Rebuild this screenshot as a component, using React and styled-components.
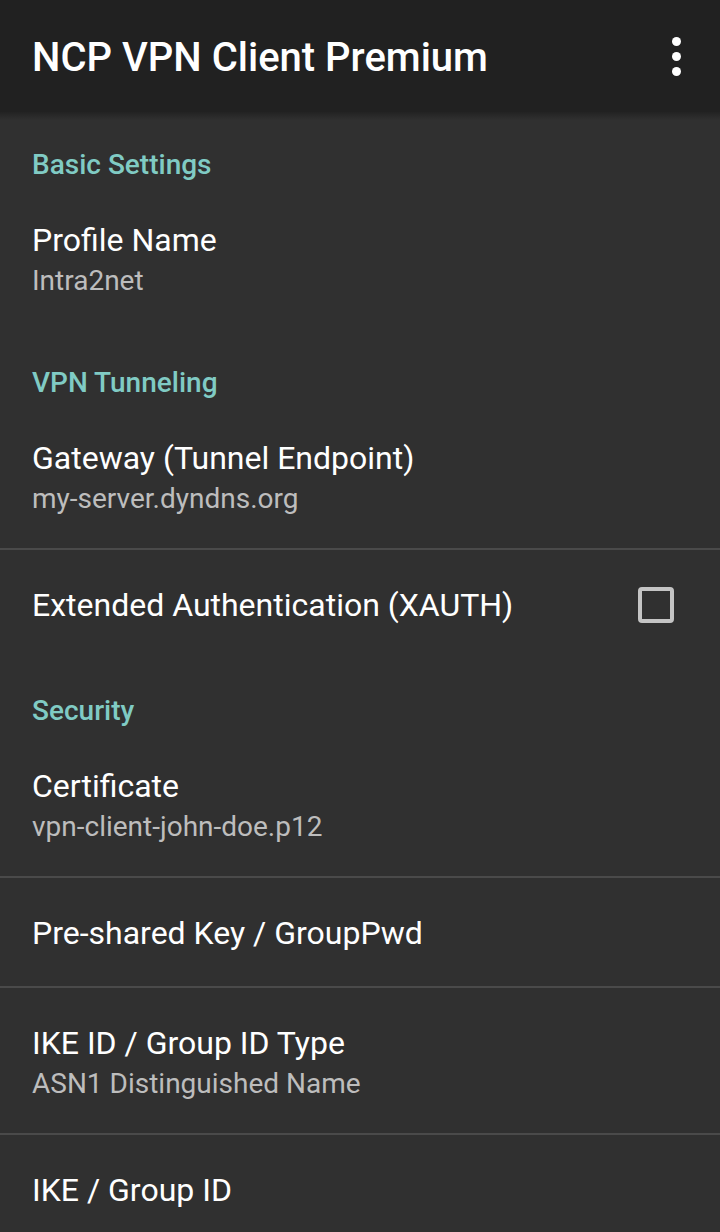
import React, { useState } from 'react';
import styled, { createGlobalStyle } from 'styled-components';

const GlobalStyle = createGlobalStyle`
    html, body {
        margin: 0;
        padding: 0;
        background: #303030;
    }
    body {
        font-family: Roboto, "Noto Sans", "Liberation Sans", sans-serif;
        -webkit-font-smoothing: antialiased;
    }
`;

const sections = [
    {
        title: 'Basic Settings',
        items: [{ title: 'Profile Name', summary: 'Intra2net' }],
    },
    {
        title: 'VPN Tunneling',
        items: [
            { title: 'Gateway (Tunnel Endpoint)', summary: 'my-server.dyndns.org' },
            { title: 'Extended Authentication (XAUTH)', checkbox: true },
        ],
    },
    {
        title: 'Security',
        items: [
            { title: 'Certificate', summary: 'vpn-client-john-doe.p12' },
            { title: 'Pre-shared Key / GroupPwd' },
            { title: 'IKE ID / Group ID Type', summary: 'ASN1 Distinguished Name' },
            { title: 'IKE / Group ID' },
        ],
    },
];

function App() {
    const [xauth, setXauth] = useState(false);

    return (
        <Screen>
            <GlobalStyle />
            <Toolbar>
                <Title>NCP VPN Client Premium</Title>
                <OverflowButton aria-label="More options">
                    <Dot />
                    <Dot />
                    <Dot />
                </OverflowButton>
            </Toolbar>

            <List>
                {sections.map((section) => (
                    <React.Fragment key={section.title}>
                        <Category>{section.title}</Category>
                        {section.items.map((item, i) => (
                            <Row
                                key={item.title}
                                $twoLine={!!item.summary}
                                $divider={i < section.items.length - 1}
                                onClick={item.checkbox ? () => setXauth(!xauth) : undefined}
                            >
                                <RowText>
                                    <RowTitle>{item.title}</RowTitle>
                                    {item.summary && <RowSummary>{item.summary}</RowSummary>}
                                </RowText>
                                {item.checkbox && <CheckBox $checked={xauth} />}
                            </Row>
                        ))}
                    </React.Fragment>
                ))}
            </List>
        </Screen>
    );
}

const Screen = styled.div`
    width: 720px;
    height: 1232px;
    overflow: hidden;
    background: #303030;
`;

const Toolbar = styled.header`
    position: relative;
    height: 112px;
    background: #212121;
    display: flex;
    align-items: center;
    justify-content: space-between;
    padding: 0 20px 0 32px;
    box-sizing: border-box;
    z-index: 1;

    &::after {
        content: '';
        position: absolute;
        left: 0;
        right: 0;
        top: 100%;
        height: 8px;
        background: linear-gradient(rgba(0, 0, 0, 0.28), rgba(0, 0, 0, 0));
    }
`;

const Title = styled.h1`
    margin: 4px 0 0;
    color: #ffffff;
    font-size: 40px;
    font-weight: 500;
    letter-spacing: 0;
    line-height: 1;
`;

const OverflowButton = styled.div`
    width: 48px;
    height: 48px;
    display: flex;
    flex-direction: column;
    align-items: center;
    justify-content: center;
    gap: 6px;
`;

const Dot = styled.span`
    width: 9px;
    height: 9px;
    border-radius: 50%;
    background: #ffffff;
`;

const List = styled.main`
    display: flex;
    flex-direction: column;
`;

const Category = styled.div`
    height: 73px;
    box-sizing: border-box;
    padding: 39px 32px 6px;
    color: #80cbc4;
    font-size: 28px;
    font-weight: 500;
    line-height: 28px;
`;

const Row = styled.div`
    box-sizing: border-box;
    padding: 0 46px 0 32px;
    display: flex;
    align-items: flex-start;
    justify-content: space-between;
    border-bottom: ${(p) => (p.$divider ? '2px solid #4a4a4a' : 'none')};
    height: ${(p) => (p.$twoLine ? 145 : 108) + (p.$divider ? 2 : 0)}px;
`;

const RowText = styled.div`
    display: flex;
    flex-direction: column;
    padding-top: 34px;
`;

const RowTitle = styled.div`
    color: #ffffff;
    font-size: 32px;
    line-height: 42px;
`;

const RowSummary = styled.div`
    color: #bdbdbd;
    font-size: 28px;
    line-height: 40px;
`;

const CheckBox = styled.span`
    margin-top: 37px;
    width: 36px;
    height: 36px;
    box-sizing: border-box;
    border: 4px solid #c4c4c4;
    border-radius: 4px;
    background: ${(p) => (p.$checked ? '#80cbc4' : 'transparent')};
`;

export default App;
